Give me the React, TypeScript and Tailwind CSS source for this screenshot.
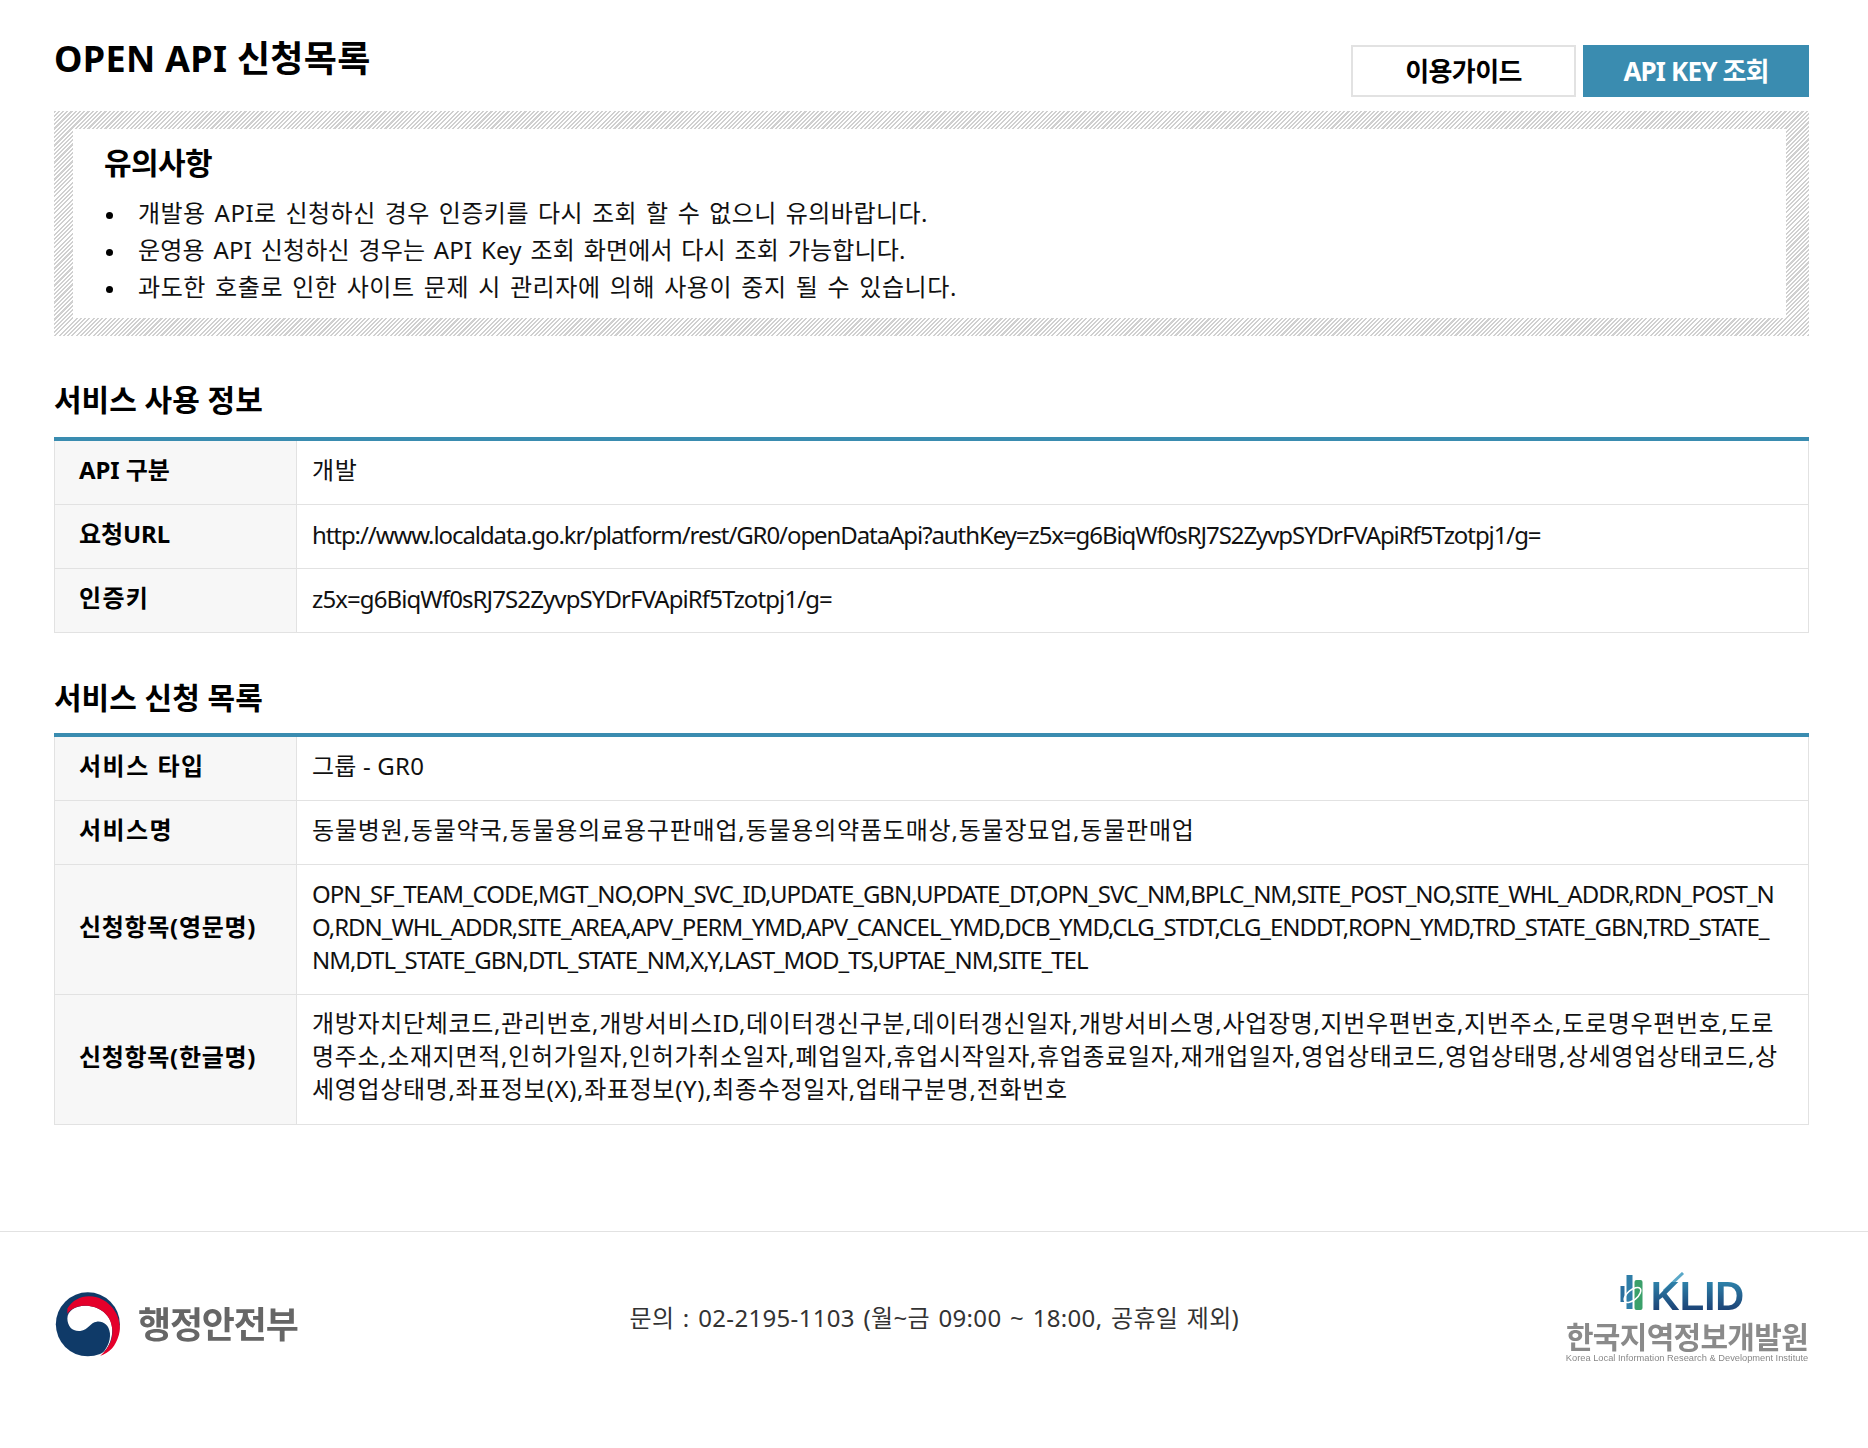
const FONT = "font-['Noto_Sans','Noto_Sans_CJK_KR',sans-serif]";
const HANGUL = "pt-[11px] pb-[19px] tracking-[0.67px]";
const LATIN = "pt-[12px] pb-[18px] tracking-[-1.03px]";

const usageRows = [
  { label: "API 구분", labelText: "tracking-[-0.1px]", text: "pt-[12px] pb-[18px] tracking-[0.67px]", lines: ["개발"] },
  {
    label: "요청URL",
    labelText: "tracking-[-0.1px]",
    text: "pt-[13px] pb-[17px] tracking-[-1.08px]",
    lines: ["http://www.localdata.go.kr/platform/rest/GR0/openDataApi?authKey=z5x=g6BiqWf0sRJ7S2ZyvpSYDrFVApiRf5Tzotpj1/g="],
  },
  {
    label: "인증키",
    labelText: "tracking-[1.3px]",
    text: "pt-[13px] pb-[17px] tracking-[-0.9px]",
    lines: ["z5x=g6BiqWf0sRJ7S2ZyvpSYDrFVApiRf5Tzotpj1/g="],
  },
];

const serviceRows = [
  { label: "서비스 타입", labelText: "tracking-[1.5px]", text: "pt-[12px] pb-[18px] tracking-[0.2px]", lines: ["그룹 - GR0"] },
  {
    label: "서비스명",
    labelText: "tracking-[1.4px]",
    text: "pt-[12px] pb-[18px] tracking-[0.8px]",
    lines: ["동물병원,동물약국,동물용의료용구판매업,동물용의약품도매상,동물장묘업,동물판매업"],
  },
  {
    label: "신청항목(영문명)",
    labelText: "tracking-[0.7px]",
    text: LATIN,
    lines: [
      "OPN_SF_TEAM_CODE,MGT_NO,OPN_SVC_ID,UPDATE_GBN,UPDATE_DT,OPN_SVC_NM,BPLC_NM,SITE_POST_NO,SITE_WHL_ADDR,RDN_POST_N",
      "O,RDN_WHL_ADDR,SITE_AREA,APV_PERM_YMD,APV_CANCEL_YMD,DCB_YMD,CLG_STDT,CLG_ENDDT,ROPN_YMD,TRD_STATE_GBN,TRD_STATE_",
      "NM,DTL_STATE_GBN,DTL_STATE_NM,X,Y,LAST_MOD_TS,UPTAE_NM,SITE_TEL",
    ],
  },
  {
    label: "신청항목(한글명)",
    labelText: "tracking-[0.7px]",
    text: HANGUL,
    lines: [
      "개방자치단체코드,관리번호,개방서비스ID,데이터갱신구분,데이터갱신일자,개방서비스명,사업장명,지번우편번호,지번주소,도로명우편번호,도로",
      "명주소,소재지면적,인허가일자,인허가취소일자,폐업일자,휴업시작일자,휴업종료일자,재개업일자,영업상태코드,영업상태명,상세영업상태코드,상",
      "세영업상태명,좌표정보(X),좌표정보(Y),최종수정일자,업태구분명,전화번호",
    ],
  },
];

const notices = [
  { text: "개발용 API로 신청하신 경우 인증키를 다시 조회 할 수 없으니 유의바랍니다.", spacing: "tracking-[0.46px]" },
  { text: "운영용 API 신청하신 경우는 API Key 조회 화면에서 다시 조회 가능합니다.", spacing: "tracking-[0.17px]" },
  { text: "과도한 호출로 인한 사이트 문제 시 관리자에 의해 사용이 중지 될 수 있습니다.", spacing: "tracking-[0.58px]" },
];

function InfoTable({ rows }: { rows: { label: string; labelText: string; text: string; lines: string[] }[] }) {
  return (
    <div className="border-t-[4px] border-[#3a8cb0]">
      {rows.map((row) => (
        <div key={row.label} className="flex border-b border-x border-[#e2e2e2]">
          <div className={`w-[242px] shrink-0 flex items-center pl-[24px] pb-[5px] bg-[#f7f7f7] border-r border-[#e2e2e2] text-[24px] font-bold text-black ${row.labelText}`}>
            {row.label}
          </div>
          <div className={`flex-1 pl-[15px] text-[24px] leading-[33px] text-[#111] whitespace-nowrap ${row.text}`}>
            {row.lines.map((line) => (
              <div key={line}>{line}</div>
            ))}
          </div>
        </div>
      ))}
    </div>
  );
}

function MoisLogo() {
  return (
    <div className="flex items-center gap-[17px] pl-[1px] mt-[14px]">
      <svg width="66" height="65" viewBox="0 0 197 197">
        <circle cx="98" cy="98" r="97" fill="#0f3a68" />
        <path d="M36 80C36 58 60 42 90 42C135 42 172 72 172 115C172 150 155 178 135 192C155 175 167 150 165 125C162 100 145 88 125 90C105 92 100 115 75 118C50 120 36 102 36 80Z" fill="#fff" />
        <path d="M36 50C55 18 90 6 125 16C175 30 205 85 192 130C182 165 165 182 135 194C160 172 175 145 172 112C168 68 132 42 90 42C68 42 48 50 36 66Z" fill="#e4002b" />
      </svg>
      <span className="text-[36px] font-bold text-[#666] tracking-[-1.2px] leading-none blur-[0.4px]">행정안전부</span>
    </div>
  );
}

function KlidLogo() {
  return (
    <div className="w-[244px] flex flex-col items-center">
      <div className="flex items-end gap-[6px] h-[40px] mr-[10px]">
        <svg width="25" height="40" viewBox="0 0 24 40" className="blur-[0.3px]">
          <rect x="0" y="14" width="4" height="16" fill="#2a6f9e" />
          <rect x="6" y="3" width="6" height="34" fill="#2f7ea8" />
          <rect x="14" y="8" width="8" height="30" rx="2" fill="#3aa06a" />
          <ellipse cx="12" cy="23" rx="10" ry="5" fill="none" stroke="#fff" strokeWidth="1.5" transform="rotate(-40 12 23)" />
        </svg>
        <span className="relative">
          <svg width="30" height="20" viewBox="0 0 30 20" className="absolute left-[8px] top-[-8px] blur-[0.3px]">
            <path d="M24 1L5 19" stroke="#5aa8c8" strokeWidth="3" fill="none" />
          </svg>
          <span className="block text-[40px] leading-[32px] font-bold text-transparent bg-clip-text bg-gradient-to-b from-[#2f86ad] to-[#1b3f73] font-['Liberation_Sans',sans-serif] blur-[0.3px]">
            KLID
          </span>
        </span>
      </div>
      <div className="mt-[10px] text-[30px] leading-[30px] font-bold text-[#8a8a8a] tracking-[-0.7px] whitespace-nowrap blur-[0.4px]">
        한국지역정보개발원
      </div>
      <div className="mt-[1px] text-[9.3px] leading-[10px] text-[#888] whitespace-nowrap font-['Liberation_Sans',sans-serif] blur-[0.2px]">
        Korea Local Information Research &amp; Development Institute
      </div>
    </div>
  );
}

export default function App() {
  return (
    <div className={`${FONT} bg-white min-h-[1448px] text-black`}>
      <div className="pl-[54px] pr-[59px] pt-[36px]">
        <header className="flex justify-between items-start h-[75px]">
          <h1 className="mt-[1px] text-[36px] leading-[44px] font-bold tracking-[0.3px]">OPEN API 신청목록</h1>
          <div className="flex gap-[7px] mt-[9px]">
            <button className="w-[225px] h-[52px] border-2 border-[#e2e2e2] bg-white text-[26px] font-bold tracking-[-0.6px]">
              이용가이드
            </button>
            <button className="w-[226px] h-[52px] bg-[#3a8cb0] text-white text-[26px] font-bold tracking-[-0.85px]">
              API KEY 조회
            </button>
          </div>
        </header>

        <section className="p-[18px] pl-[19px] pr-[23px] bg-[repeating-linear-gradient(135deg,#d0d0d0_0,#d0d0d0_1.5px,#ffffff_1.5px,#ffffff_3px)]">
          <div className="bg-white h-[189px] pl-[31px] pt-[14px]">
            <h2 className="text-[30px] leading-[40px] font-bold tracking-[-0.6px]">유의사항</h2>
            <ul className="mt-[11px] text-[24px] leading-[37px] [word-spacing:2.3px] text-[#111]">
              {notices.map((notice) => (
                <li key={notice.text} className={`flex items-center ${notice.spacing}`}>
                  <span className="ml-[2px] mt-[6px] mr-[25px] w-[7px] h-[7px] rounded-full bg-black shrink-0" />
                  {notice.text}
                </li>
              ))}
            </ul>
          </div>
        </section>

        <h3 className="mt-[42px] mb-[16px] text-[30px] leading-[43px] font-bold tracking-[0px]">서비스 사용 정보</h3>
        <InfoTable rows={usageRows} />

        <h3 className="mt-[43px] mb-[14px] text-[30px] leading-[43px] font-bold tracking-[0px]">서비스 신청 목록</h3>
        <InfoTable rows={serviceRows} />
      </div>

      <footer className="mt-[106px] border-t border-[#e2e2e2] pl-[54px] pr-[59px] pt-[40px] flex justify-between items-center">
        <MoisLogo />
        <p className="ml-[6px] text-[24px] tracking-[0.33px] [word-spacing:2px] text-[#333]">문의 : 02-2195-1103 (월~금 09:00 ~ 18:00, 공휴일 제외)</p>
        <KlidLogo />
      </footer>
    </div>
  );
}
